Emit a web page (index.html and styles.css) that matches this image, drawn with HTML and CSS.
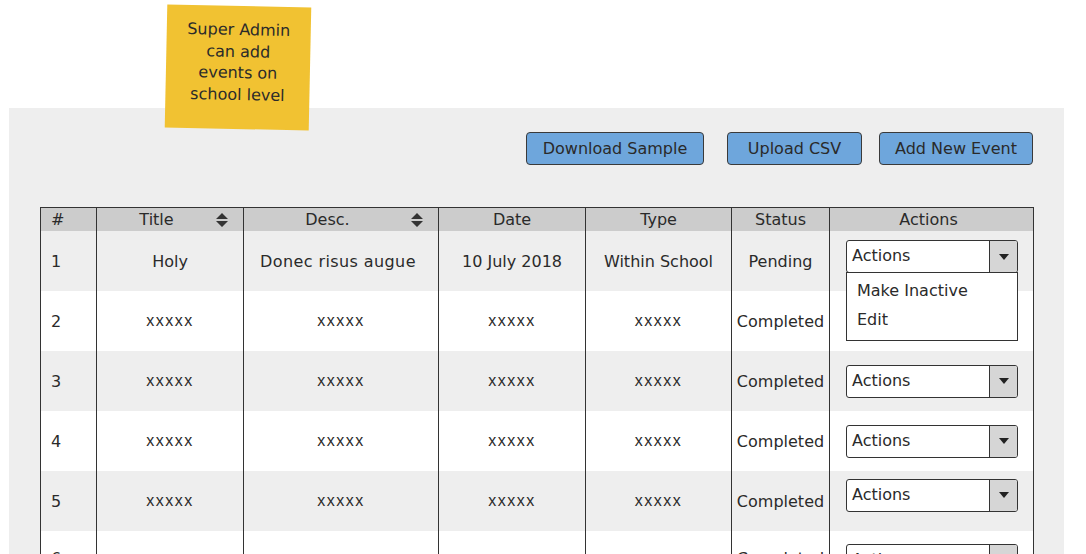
FILE: index.html
```html
<!DOCTYPE html>
<html>
<head>
<meta charset="utf-8">
<link rel="stylesheet" href="styles.css">
</head>
<body>
<div class="note">Super Admin<br>can add<br>events on<br>school level</div>
<div class="panel">
  <div class="toolbar">
    <button class="btn btn-dl">Download Sample</button>
    <button class="btn btn-up">Upload CSV</button>
    <button class="btn btn-add">Add New Event</button>
  </div>
  <table class="grid">
    <colgroup>
      <col class="c-num"><col class="c-title"><col class="c-desc"><col class="c-date"><col class="c-type"><col class="c-status"><col class="c-actions">
    </colgroup>
    <thead>
      <tr>
        <th class="num">#</th>
        <th><div class="sorthead"><span class="sortlabel">Title</span><svg class="sorticon" width="12" height="16" viewBox="0 0 12 16"><path d="M6 1 L12 7 L0 7 Z M0 9 L12 9 L6 15 Z" fill="#333"/></svg></div></th>
        <th><div class="sorthead"><span class="sortlabel">Desc.</span><svg class="sorticon" width="12" height="16" viewBox="0 0 12 16"><path d="M6 1 L12 7 L0 7 Z M0 9 L12 9 L6 15 Z" fill="#333"/></svg></div></th>
        <th>Date</th>
        <th>Type</th>
        <th>Status</th>
        <th class="act-head">Actions</th>
      </tr>
    </thead>
    <tbody>
      <tr>
        <td class="num">1</td><td>Holy</td><td class="wide">Donec risus augue</td><td>10 July 2018</td><td>Within School</td><td>Pending</td>
        <td class="actions actions-open">
          <div class="dropdown">
            <div class="select"><span class="sel-text">Actions</span><span class="sel-arrow"><svg width="10" height="6" viewBox="0 0 10 6"><path d="M0 0 L10 0 L5 6 Z" fill="#222"/></svg></span></div>
            <div class="menu"><div class="menu-item">Make Inactive</div><div class="menu-item">Edit</div></div>
          </div>
        </td>
      </tr>
      <tr>
        <td class="num">2</td><td class="ph">xxxxx</td><td class="ph">xxxxx</td><td class="ph">xxxxx</td><td class="ph">xxxxx</td><td>Completed</td><td class="actions"></td>
      </tr>
      <tr>
        <td class="num">3</td><td class="ph">xxxxx</td><td class="ph">xxxxx</td><td class="ph">xxxxx</td><td class="ph">xxxxx</td><td>Completed</td>
        <td class="actions"><div class="select"><span class="sel-text">Actions</span><span class="sel-arrow"><svg width="10" height="6" viewBox="0 0 10 6"><path d="M0 0 L10 0 L5 6 Z" fill="#222"/></svg></span></div></td>
      </tr>
      <tr>
        <td class="num">4</td><td class="ph">xxxxx</td><td class="ph">xxxxx</td><td class="ph">xxxxx</td><td class="ph">xxxxx</td><td>Completed</td>
        <td class="actions"><div class="select"><span class="sel-text">Actions</span><span class="sel-arrow"><svg width="10" height="6" viewBox="0 0 10 6"><path d="M0 0 L10 0 L5 6 Z" fill="#222"/></svg></span></div></td>
      </tr>
      <tr>
        <td class="num">5</td><td class="ph">xxxxx</td><td class="ph">xxxxx</td><td class="ph">xxxxx</td><td class="ph">xxxxx</td><td>Completed</td>
        <td class="actions actions-high"><div class="select"><span class="sel-text">Actions</span><span class="sel-arrow"><svg width="10" height="6" viewBox="0 0 10 6"><path d="M0 0 L10 0 L5 6 Z" fill="#222"/></svg></span></div></td>
      </tr>
      <tr class="last">
        <td class="num">6</td><td class="ph">xxxxx</td><td class="ph">xxxxx</td><td class="ph">xxxxx</td><td class="ph">xxxxx</td><td>Completed</td>
        <td class="actions"><div class="select"><span class="sel-text">Actions</span><span class="sel-arrow"><svg width="10" height="6" viewBox="0 0 10 6"><path d="M0 0 L10 0 L5 6 Z" fill="#222"/></svg></span></div></td>
      </tr>
    </tbody>
  </table>
</div>
</body>
</html>
```

FILE: styles.css
```css
html, body {
  margin: 0;
  padding: 0;
  background: #ffffff;
  overflow: hidden;
  height: 554px;
}
body {
  position: relative;
  font-family: "DejaVu Sans", "Liberation Sans", sans-serif;
  font-size: 16px;
  color: #2a2a2a;
}
.note {
  position: absolute;
  left: 166px;
  top: 6px;
  width: 144px;
  height: 123px;
  box-sizing: border-box;
  padding-top: 13px;
  background: #f1c232;
  text-align: center;
  line-height: 21.5px;
  font-size: 16px;
  color: #2a2a2a;
  transform: rotate(1.2deg);
  z-index: 2;
}
.panel {
  margin: 108px 0 0 9px;
  width: 1055px;
  height: 460px;
  background: #eeeeee;
  overflow: hidden;
}
.toolbar {
  display: flex;
  justify-content: flex-end;
  gap: 17px;
  padding: 24px 31px 0 0;
}
.btn {
  height: 33px;
  box-sizing: border-box;
  background: #6ea6dc;
  border: 1px solid #3a3a3a;
  border-radius: 4px;
  font-family: "DejaVu Sans", "Liberation Sans", sans-serif;
  font-size: 16px;
  color: #2a2a2a;
  padding: 0;
  text-align: center;
}
.btn-dl { width: 178px; margin-right: 6px; }
.btn-up { width: 135px; }
.btn-add { width: 154px; }
.grid {
  margin: 42px 0 0 31px;
  width: 994px;
  border-collapse: collapse;
  table-layout: fixed;
  border: 1px solid #333;
}
.c-num { width: 56px; }
.c-title { width: 147px; }
.c-desc { width: 195px; }
.c-date { width: 147px; }
.c-type { width: 146px; }
.c-status { width: 98px; }
.c-actions { width: 204px; }
.grid th {
  height: 23px;
  padding: 0;
  background: #cccccc;
  font-weight: normal;
  font-size: 16px;
  line-height: 20px;
  text-align: center;
  border-left: 1px solid #333;
  border-right: 1px solid #333;
}
.grid th.act-head { padding-right: 6px; }
.grid td {
  height: 60px;
  box-sizing: border-box;
  padding: 0;
  text-align: center;
  vertical-align: middle;
  border-left: 1px solid #333;
  border-right: 1px solid #333;
  white-space: nowrap;
}
.grid tbody tr:nth-child(odd) { background: #eeeeee; }
.grid tbody tr:nth-child(even) { background: #ffffff; }
.grid tr.last td { padding-bottom: 5px; }
.grid .num {
  text-align: left;
  padding-left: 10px;
}
.grid .wide { letter-spacing: 0.4px; padding-right: 6px; }
.sorthead {
  display: flex;
  align-items: center;
  padding-right: 15px;
}
.sortlabel {
  flex: 1;
  text-align: center;
}
.sorticon { display: block; }
.grid .ph {
  font-family: "Liberation Sans", sans-serif;
  font-size: 16px;
  letter-spacing: 1.5px;
}
.grid td.actions {
  text-align: left;
  padding-left: 16px;
}
.grid tr.last td.actions { padding-bottom: 0; }
.grid td.actions-open {
  vertical-align: top;
  padding-top: 9px;
}
.grid td.actions-high {
  padding-bottom: 12px;
}
.dropdown {
  position: relative;
}
.select {
  display: flex;
  width: 172px;
  height: 33px;
  box-sizing: border-box;
  border: 1px solid #333;
  border-radius: 3px;
  background: #ffffff;
  overflow: hidden;
}
.sel-text {
  flex: 1;
  padding-left: 5px;
  line-height: 29px;
  font-size: 16px;
}
.sel-arrow {
  width: 27px;
  border-left: 1px solid #333;
  background: #d6d6d6;
  display: flex;
  align-items: center;
  justify-content: center;
}
.menu {
  position: absolute;
  left: 0;
  top: 32px;
  width: 172px;
  height: 69px;
  box-sizing: border-box;
  border: 1px solid #333;
  background: #ffffff;
  padding: 3px 0 0 10px;
  z-index: 3;
}
.menu-item {
  line-height: 29px;
  font-size: 16px;
}
```
